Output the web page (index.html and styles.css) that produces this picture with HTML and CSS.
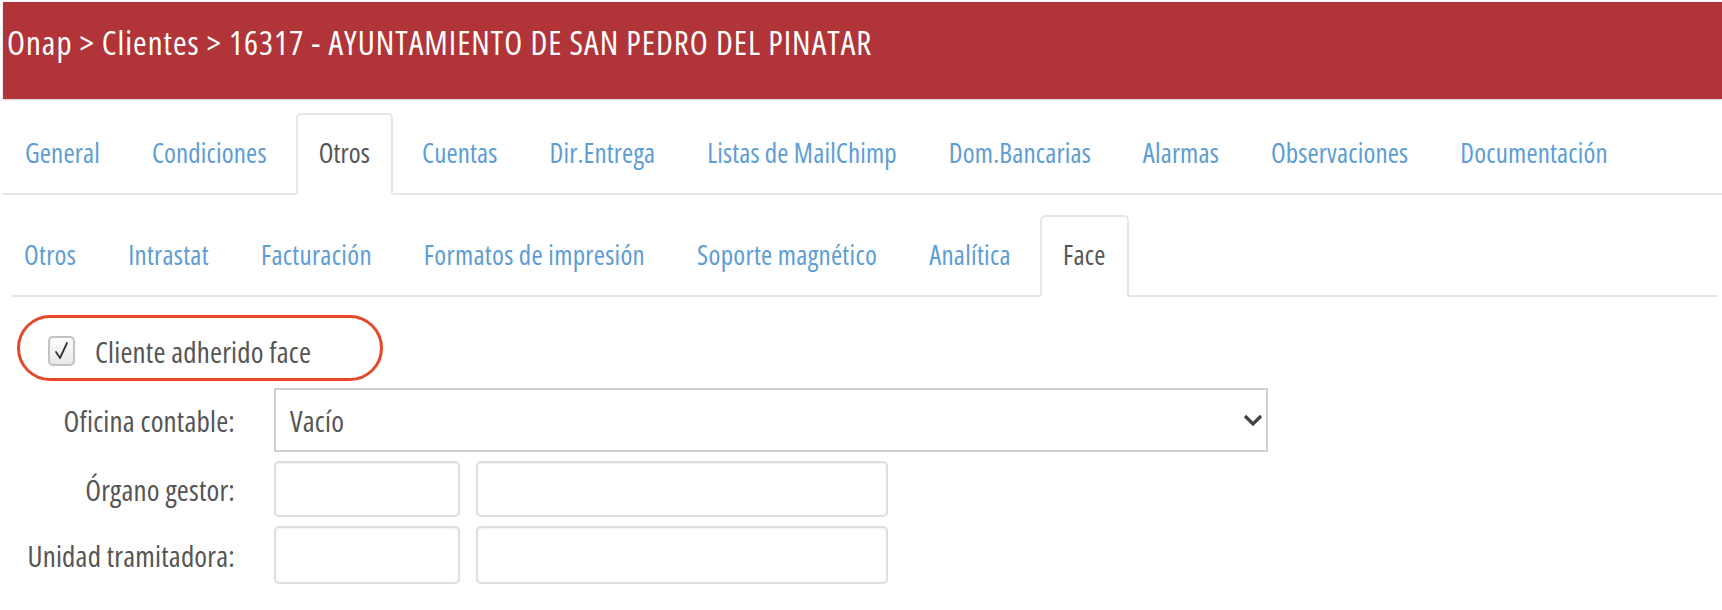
FILE: index.html
```html
<!DOCTYPE html>
<html lang="es">
<head>
  <meta charset="UTF-8" />
  <title>Onap - Clientes</title>
  <link rel="stylesheet" href="styles.css">
</head>
<body>

  <header class="topbar">
    <h1>Onap &gt; Clientes &gt; 16317 - AYUNTAMIENTO DE SAN PEDRO DEL PINATAR</h1>
  </header>

  <ul class="tabs main-tabs">
    <li class="tab">General</li>
    <li class="tab">Condiciones</li>
    <li class="tab active">Otros</li>
    <li class="tab">Cuentas</li>
    <li class="tab">Dir.Entrega</li>
    <li class="tab">Listas de MailChimp</li>
    <li class="tab">Dom.Bancarias</li>
    <li class="tab">Alarmas</li>
    <li class="tab">Observaciones</li>
    <li class="tab">Documentación</li>
  </ul>

  <ul class="tabs sub-tabs">
    <li class="tab">Otros</li>
    <li class="tab">Intrastat</li>
    <li class="tab">Facturación</li>
    <li class="tab">Formatos de impresión</li>
    <li class="tab">Soporte magnético</li>
    <li class="tab">Analítica</li>
    <li class="tab active">Face</li>
  </ul>

  <div class="face-form">
    <label class="check-row">
      <span class="checkbox">
        <svg width="17" height="20" viewBox="0 0 17 20"><path d="M3 11 L7 17 L14 2" fill="none" stroke="#333" stroke-width="1.8" stroke-linecap="round" stroke-linejoin="round"/></svg>
      </span>
      Cliente adherido face
    </label>

    <div class="form-row first">
      <label for="oficina">Oficina contable:</label>
      <div class="select-wrap">
        <select id="oficina">
          <option>Vacío</option>
        </select>
        <svg class="chevron" width="20" height="13" viewBox="0 0 20 13"><path d="M2 2 L10 10 L18 2" fill="none" stroke="#444" stroke-width="3.2"/></svg>
      </div>
    </div>

    <div class="form-row">
      <label for="organo">Órgano gestor:</label>
      <div class="pair">
        <input type="text" id="organo" class="short" />
        <input type="text" class="long" />
      </div>
    </div>

    <div class="form-row">
      <label for="unidad">Unidad tramitadora:</label>
      <div class="pair tall">
        <input type="text" id="unidad" class="short" />
        <input type="text" class="long" />
      </div>
    </div>
  </div>

</body>
</html>
```
FILE: styles.css
```css
body {
  margin: 0;
  font-family: "Open Sans", "Noto Sans", sans-serif;
  font-stretch: condensed;
  background: #fff;
  color: #555;
}
.topbar {
  margin: 2px 0 0 3px;
  height: 97px;
  box-sizing: border-box;
  padding: 18px 0 0 4px;
  background: #b13538;
  box-shadow: 0 1px 2px rgba(0, 0, 0, 0.2);
}
.topbar h1 {
  margin: 0;
  font-size: 33px;
  font-weight: 500;
  letter-spacing: 1px;
  line-height: 45px;
  color: #fff;
  white-space: nowrap;
}
.tabs {
  list-style: none;
  display: flex;
  margin: 14px 0 0 2px;
  padding: 0;
  border-bottom: 2px solid #e6e6e6;
}
.tab {
  padding: 20px 21px 22px;
  margin: 0 6px -2px 0;
  font-size: 27px;
  letter-spacing: 0.3px;
  line-height: 36px;
  color: #5e9dd4;
  border: 2px solid transparent;
  border-radius: 5px 5px 0 0;
  white-space: nowrap;
}
.main-tabs .tab {
  letter-spacing: 0.15px;
}
.tab.active {
  color: #555;
  background: #fff;
  border-color: #e6e6e6;
  border-bottom-color: #fff;
}
.sub-tabs {
  margin: 20px 4px 0 11px;
}
.sub-tabs .tab:first-child {
  padding-left: 11px;
}
.check-row {
  display: flex;
  align-items: center;
  gap: 20px;
  width: 366px;
  height: 66px;
  box-sizing: border-box;
  margin: 18px 0 0 17px;
  padding: 6px 0 0 28px;
  border: 3px solid #e6482c;
  border-radius: 33px;
  font-size: 29px;
  letter-spacing: 0.2px;
  color: #555;
}
.checkbox {
  display: flex;
  align-items: center;
  justify-content: center;
  width: 27px;
  height: 30px;
  box-sizing: border-box;
  border: 2px solid #c2c2c2;
  border-radius: 5px;
  background: linear-gradient(#fdfdfd, #e8e8e8);
}
.form-row {
  display: grid;
  grid-template-columns: 235px auto;
  column-gap: 39px;
  align-items: center;
  margin-top: 9px;
}
.form-row.first {
  margin-top: 7px;
}
.form-row label {
  text-align: right;
  font-size: 29px;
  letter-spacing: 0.2px;
  color: #555;
  white-space: nowrap;
}
.select-wrap {
  position: relative;
  width: 994px;
}
.select-wrap select {
  appearance: none;
  width: 100%;
  height: 64px;
  padding: 0 40px 0 14px;
  border: 2px solid #d2d2d2;
  border-radius: 0;
  background: #fff;
  font-family: inherit;
  font-stretch: condensed;
  font-size: 29px;
  letter-spacing: 0.2px;
  color: #555;
}
.chevron {
  position: absolute;
  right: 5px;
  top: 26px;
}
.pair {
  display: flex;
  gap: 16px;
}
.pair input {
  height: 56px;
  box-sizing: border-box;
  border: 2px solid #dedede;
  border-radius: 5px;
  box-shadow: inset 0 1px 2px rgba(0, 0, 0, 0.06);
  font-family: inherit;
  font-size: 26px;
}
.pair.tall input {
  height: 58px;
}
.pair .short {
  width: 186px;
}
.pair .long {
  width: 412px;
}
```
